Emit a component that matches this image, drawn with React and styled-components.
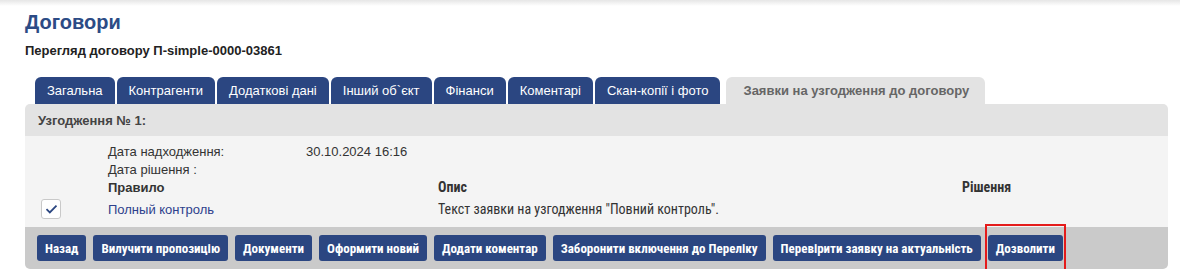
import React from 'react'
import styled, { createGlobalStyle } from 'styled-components'

const BLUE = '#2b4681'
const NARROW = '"Roboto Condensed", "DejaVu Sans Condensed", "Liberation Sans", Arial, sans-serif'

const GlobalStyle = createGlobalStyle`
  body {
    margin: 0;
    background: #fff;
    font-family: "Liberation Sans", Arial, sans-serif;
    font-size: 13px;
    color: #333;
  }
`

const TopShade = styled.div`
  height: 6px;
  background: linear-gradient(#e6e6e6, #fff);
`

const Page = styled.div`
  padding: 3px 12px 0 25px;
`

const Title = styled.h1`
  margin: 0;
  font-size: 20px;
  line-height: 26px;
  font-weight: bold;
  color: #2c4b85;
`

const Subtitle = styled.h2`
  margin: 8px 0 0;
  font-size: 13px;
  line-height: 16px;
  font-weight: bold;
  color: #222;
`

const Tabs = styled.div`
  display: flex;
  gap: 2px;
  margin: 18px 0 0 10px;
`

const Tab = styled.div`
  height: 27px;
  padding: ${p => (p.$active ? '0 16px 0 17px' : '0 12px')};
  display: flex;
  align-items: center;
  border-radius: 6px 6px 0 0;
  background: ${p => (p.$active ? '#e3e3e3' : BLUE)};
  color: ${p => (p.$active ? '#666' : '#fff')};
  font-weight: ${p => (p.$active ? 'bold' : 'normal')};
  font-size: 13px;
  margin-left: ${p => (p.$active ? 4 : 0)}px;
  white-space: nowrap;
`

const Panel = styled.div`
  width: 1143px;
  border-radius: 5px;
  overflow: hidden;
`

const PanelHead = styled.div`
  height: 32px;
  padding-left: 13px;
  display: flex;
  align-items: center;
  background: #e3e3e3;
  font-weight: bold;
  font-size: 13px;
  color: #444;
`

const PanelBody = styled.div`
  background: #f4f4f4;
  padding: 6px 0 5px;
`

const InfoRow = styled.div`
  display: grid;
  grid-template-columns: 198px auto;
  padding-left: 83px;
  height: 18px;
  align-items: center;
  color: #333;
`

const RuleGrid = styled.div`
  display: grid;
  grid-template-columns: 83px 330px 524px auto;
  align-items: center;
`

const HeadCell = styled.div`
  height: 18px;
  display: flex;
  align-items: center;
  font-weight: bold;
  font-size: ${p => (p.$narrow ? 14 : 13)}px;
  font-family: ${p => (p.$narrow ? NARROW : 'inherit')};
  color: #333;
`

const Cell = styled.div`
  height: 26px;
  display: flex;
  align-items: center;
  font-size: ${p => (p.$narrow ? 14 : 13)}px;
  font-family: ${p => (p.$narrow ? NARROW : 'inherit')};
  color: ${p => (p.$link ? '#2d3f8c' : '#333')};
`

const CheckBox = styled.span`
  width: 18px;
  height: 18px;
  margin-left: 16px;
  border: 1px solid #c9c9c9;
  border-radius: 3px;
  background: #fff;
  display: flex;
  align-items: center;
  justify-content: center;
`

const ButtonBar = styled.div`
  background: #cacaca;
  padding: 8px 12px;
  display: flex;
  gap: 7px;
`

const Button = styled.button`
  height: 26px;
  padding: 0 8px;
  border: none;
  border-radius: 3px;
  background: ${BLUE};
  color: #fff;
  font-family: ${NARROW};
  font-weight: bold;
  font-size: 13px;
  white-space: nowrap;
  cursor: pointer;
`

const Highlight = styled.span`
  position: relative;
  display: flex;

  &::after {
    content: '';
    position: absolute;
    left: -3px;
    right: -3px;
    top: -11px;
    bottom: -10px;
    border: 2px solid #e41b1b;
    pointer-events: none;
  }
`

const tabs = [
  'Загальна',
  'Контрагенти',
  'Додаткові дані',
  'Інший об`єкт',
  'Фінанси',
  'Коментарі',
  'Скан-копії і фото'
]

const buttons = [
  'Назад',
  'Вилучити пропозицію',
  'Документи',
  'Оформити новий',
  'Додати коментар',
  'Заборонити включення до Переліку',
  'Перевірити заявку на актуальність'
]

export default function App() {
  return (
    <>
      <GlobalStyle />
      <TopShade />
      <Page>
        <Title>Договори</Title>
        <Subtitle>Перегляд договору П-simple-0000-03861</Subtitle>
        <Tabs>
          {tabs.map(t => (
            <Tab key={t}>{t}</Tab>
          ))}
          <Tab $active>Заявки на узгодження до договору</Tab>
        </Tabs>
        <Panel>
          <PanelHead>Узгодження № 1:</PanelHead>
          <PanelBody>
            <InfoRow>
              <span>Дата надходження:</span>
              <span>30.10.2024 16:16</span>
            </InfoRow>
            <InfoRow>
              <span>Дата рішення :</span>
              <span />
            </InfoRow>
            <RuleGrid>
              <HeadCell />
              <HeadCell>Правило</HeadCell>
              <HeadCell $narrow>Опис</HeadCell>
              <HeadCell $narrow>Рішення</HeadCell>
              <Cell>
                <CheckBox>
                  <svg width="13" height="10" viewBox="0 0 13 10">
                    <path d="M1.5 5.2 L4.8 8.4 L11.5 1.6" fill="none" stroke="#2b4681" strokeWidth="1.8" />
                  </svg>
                </CheckBox>
              </Cell>
              <Cell $link>Полный контроль</Cell>
              <Cell $narrow>Текст заявки на узгодження "Повний контроль".</Cell>
              <Cell />
            </RuleGrid>
          </PanelBody>
          <ButtonBar>
            {buttons.map(b => (
              <Button key={b}>{b}</Button>
            ))}
            <Highlight>
              <Button>Дозволити</Button>
            </Highlight>
          </ButtonBar>
        </Panel>
      </Page>
    </>
  )
}
